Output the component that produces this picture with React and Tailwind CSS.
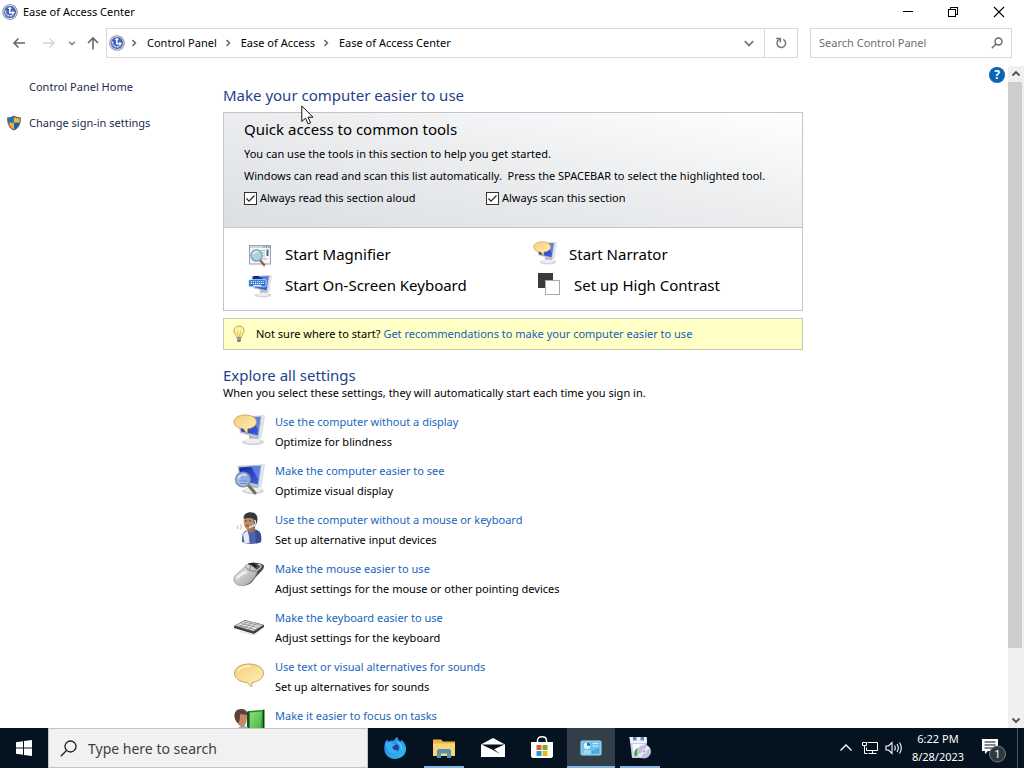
import React from "react";

const crumbs = ["Control Panel", "Ease of Access", "Ease of Access Center"];

function AccessIcon({ className }) {
  return (
    <svg viewBox="0 0 16 16" className={className} aria-hidden="true">
      <circle cx="8" cy="8" r="7.8" fill="#7f8ca3" />
      <circle cx="8" cy="8" r="6.9" fill="#cfd8e8" />
      <circle cx="8" cy="8" r="6" fill="#4560b5" />
      <path d="M7.800 4.500v4.200h3" fill="none" stroke="#fff" strokeWidth="1.500" />
      <path d="M5.800 5 7.800 2.600l2 2.400zM10.400 6.600l2.500 2.100-2.500 2z" fill="#fff" />
      <path d="M3.500 6.500c0 3.400 1.800 5.300 4.500 5.300 1.500 0 2.500-.5 3.300-1.300" fill="none" stroke="#dfe8ff" strokeWidth="1.500" strokeDasharray="1.800 .7" />
    </svg>
  );
}

function Shield() {
  return (
    <svg viewBox="0 0 16 16" className="h-4 w-4 shrink-0" aria-hidden="true">
      <path d="M8 .6C6 1.900 3.600 2.400 1.100 2.400c-.2 6.300 1.900 10.800 6.900 13.200 5-2.400 7.100-6.900 6.900-13.200C12.400 2.400 10 1.900 8 .6z" fill="#5a6470" />
      <path d="M8 1.900C6.300 2.900 4.200 3.400 2.200 3.400c0 1.500.1 3 .5 4.300H8z" fill="#2173b8" />
      <path d="M8 1.900c1.700 1 3.800 1.500 5.800 1.500 0 1.500-.1 3-.5 4.300H8z" fill="#f3b544" />
      <path d="M2.700 7.700C3.500 10.800 5.200 13 8 14.500V7.700z" fill="#f0ac3c" />
      <path d="M13.300 7.700C12.500 10.800 10.800 13 8 14.500V7.700z" fill="#1c62a5" />
    </svg>
  );
}

function MonitorShape() {
  return (
    <>
      <ellipse cx="20" cy="28" rx="11" ry="3.200" fill="#d3d5da" />
      <path d="M16 20l9 2 1 6-10-1z" fill="#b2b6bf" />
      <ellipse cx="19.500" cy="27" rx="8.500" ry="2.400" fill="#edeef1" />
      <path d="M4.500 3L29 1.500 26 24 7 19z" fill="#bcc3d0" />
      <path d="M28.500 1.500l3 .4-3.500 22-2.500.1z" fill="#e6e8ed" stroke="#b6bbc5" strokeWidth=".4" />
      <path d="M6 4.500L27.500 3l-2.700 18.500L8.200 17.500z" fill="url(#screen)" />
      <path d="M18 3.700L27.500 3l-2 13.500z" fill="#7d9cf0" opacity=".65" />
    </>
  );
}

function Bubble() {
  return (
    <path d="M12 1C5.500 1 1 4 1 8s4 6.500 9.500 6.800L14 20l.8-5.300C20 14.200 23.500 11.500 23.500 8 23.500 4 19 1 12 1z" fill="url(#bubble)" stroke="#c49a45" strokeWidth=".8" />
  );
}

function NarratorIcon({ className }) {
  return (
    <svg viewBox="0 0 32 32" className={className} aria-hidden="true">
      <MonitorShape />
      <Bubble />
    </svg>
  );
}

function SeeIcon({ className }) {
  return (
    <svg viewBox="0 0 32 32" className={className} aria-hidden="true">
      <MonitorShape />
      <path d="M15 22l7 8" stroke="#77705f" strokeWidth="3" strokeLinecap="round" />
      <circle cx="10" cy="16.500" r="7.300" fill="#9ebbe8" fillOpacity=".88" stroke="#8390a6" strokeWidth="1.600" />
      <path d="M5.500 15c1.500-3 5-4.500 8-2.500" stroke="#e3eeff" strokeWidth="1.500" fill="none" />
      <path d="M5.500 18h9M6.500 20.500h7" stroke="#6f8dd0" strokeWidth="1" />
    </svg>
  );
}

function ScreenKeyboardIcon({ className }) {
  return (
    <svg viewBox="0 0 32 32" className={className} aria-hidden="true">
      <MonitorShape />
      <path d="M8 8V3.500h7" stroke="#0f2370" strokeWidth="2" fill="none" />
      <rect x="1" y="7.500" width="23" height="9.500" rx="1" fill="#2377c9" stroke="#e6f1fb" />
      <path d="M3.500 10.300h18M3.500 12.700h18" stroke="#fff" strokeWidth="1.400" strokeDasharray="1.800 1" />
      <path d="M7 15.200h11" stroke="#fff" strokeWidth="1.300" />
    </svg>
  );
}

function MagnifierIcon({ className }) {
  return (
    <svg viewBox="0 0 24 24" className={className} aria-hidden="true">
      <rect x="1.500" y="2.500" width="21" height="18.500" fill="#f5f7f9" stroke="#9aa0a7" />
      <path d="M2 4h20" stroke="#cfd5db" strokeWidth="2" />
      <path d="M15.500 4h1M18 4h1M20.500 4h1" stroke="#3d444c" strokeWidth="1.200" />
      <path d="M13 7.500h4M14 10h3M14 13h3M14 16h5" stroke="#a6b6bf" />
      <path d="M18.500 6.500h2v6.500h-2z" fill="#406e8b" />
      <path d="M12 17l4 5" stroke="#a15b52" strokeWidth="2.400" strokeLinecap="round" />
      <circle cx="8.500" cy="12.500" r="5.600" fill="#a6d7e0" stroke="#849aa8" strokeWidth="1.300" />
      <path d="M5 11c1-2 3-3 5-2" fill="none" stroke="#e4f7fa" strokeWidth="1.300" />
    </svg>
  );
}

function ContrastIcon({ className }) {
  return (
    <svg viewBox="0 0 24 24" className={className} aria-hidden="true">
      <rect x="1" y="1" width="15" height="15" fill="#3b3b3b" />
      <rect x="8.500" y="8.500" width="14" height="14" fill="#fff" stroke="#a9a9a9" />
    </svg>
  );
}

function PersonIcon({ className }) {
  return (
    <svg viewBox="0 0 32 32" className={className} aria-hidden="true">
      <path d="M9 30c-.5-7 1-11 6-12l7-.5c5 1.500 7 4 6 12.500-5 2.500-14 2.500-19 0z" fill="#5262ae" />
      <path d="M14.500 18.500l1.500 6 .5 6.500h-5l-1.500-9z" fill="#e6eaf6" />
      <path d="M22 17.500c5 1.500 7 4 6 12.500l-5 1.500z" fill="#3c4b96" />
      <path d="M14 15l8-1v4.500L17 21l-2.500-2.500z" fill="#9d7152" />
      <path d="M11 6c-.5 3-.5 9 2.500 11 3 .8 7-.5 8.500-5l1-6z" fill="#bd8f6d" />
      <path d="M10.500 6.500C10.500 2.500 13.500.3 17.500.3c4.500 0 7 2.700 7 6.700 0 3-1 5-2.500 7-1-1.500-1-5-2-7.500-3-1-6-.5-9.500 0z" fill="#34373b" />
      <path d="M12 8.800h2M16 8.800h2M13 13.800h3" stroke="#5f3f30" />
      <path d="M21.500 8c1.500 1.500 1.500 4-.5 5.500l-5 2" fill="none" stroke="#eef1f5" strokeWidth="1.200" />
      <path d="M7.500 12.500q2 2.500 0 5M5 13.500q-2 2 0 3.500" fill="none" stroke="#d8b27c" />
    </svg>
  );
}

function MouseIcon({ className }) {
  return (
    <svg viewBox="0 0 32 32" className={className} aria-hidden="true">
      <path d="M14 4C17 1 28 1 31 4.500c1 4-6 8.500-10 14-3 5-8 7-13 5z" fill="#4c4d50" />
      <path d="M15 2.500l6-1 3 4-5 4z" fill="#222" />
      <path d="M.8 18C1 13 9 10 13 4c3-2 9 2 11 6 0 5-6 12-11 14C8 26 .5 24 .8 18z" fill="url(#silver)" stroke="#85878a" strokeWidth=".6" />
      <path d="M12.500 5.500c2 3.500 6 5 11 4.500M18 4.500l-1.500 4" stroke="#7b7d81" fill="none" />
      <path d="M4 17c4-4 7-5.500 10-6" stroke="#fff" strokeWidth="2.500" fill="none" opacity=".7" />
      <path d="M25 3.500c3 0 4 1.500 2 3.500l-4 3" stroke="#c4c6c9" strokeWidth="1.300" fill="none" />
    </svg>
  );
}

function KeyboardIcon({ className }) {
  return (
    <svg viewBox="0 0 32 32" className={className} aria-hidden="true">
      <path d="M1 16l11-6 19 5v2l-10 7L1 18z" fill="#3e3f42" />
      <path d="M2 15.500l10.500-5L30 15l-9.500 6z" fill="#e8e9eb" stroke="#8a8c90" strokeWidth=".6" />
      <path d="M5 15l17 4.500M8 13.500l17 4M11 12l16 3.500M7 17l7-5M11 18l8-5M16 19l7-5" stroke="#85878c" strokeWidth=".8" />
      <path d="M7 21.500l14 3.500 8-6" stroke="#dcdcdc" strokeWidth="1" fill="none" />
    </svg>
  );
}

function SoundBubbleIcon({ className }) {
  return (
    <svg viewBox="0 0 32 32" className={className} aria-hidden="true">
      <path d="M16 5C7.500 5 1.500 9 1.500 14.200S7 23 14 23.500L18.500 28l.7-4.600C26 22.600 30.500 19 30.500 14.200 30.500 9 24.500 5 16 5z" fill="url(#bubble)" stroke="#c7a563" />
      <path d="M5 12c2-3.500 7-5 12-5" stroke="#fff7dd" strokeWidth="1.500" fill="none" opacity=".8" />
    </svg>
  );
}

function FocusIcon({ className }) {
  return (
    <svg viewBox="0 0 32 32" className={className} aria-hidden="true">
      <path d="M15 3l15-1v27l-15-2z" fill="#1f8f2b" />
      <path d="M17 4.500l12-1-1 22-11-1z" fill="url(#green)" />
      <path d="M30 1.500h1.500V30H30z" fill="#173c1a" />
      <path d="M14 3.500h2V29h-2z" fill="#1c4b24" />
      <path d="M2 32c0-10 3-14 8-14s9 3 9 14z" fill="#8fb3cd" />
      <path d="M3 6c0 7 1.500 12 6.500 13 4-1.500 4.500-7 4.500-13z" fill="#c08a67" />
      <path d="M1.500 9C1 4 3.500 1 8 1s6.500 2 6 6c-3 0-5-1-7-.5 0 4-.5 7-1.500 9-2-1-3.300-3-4-6.500z" fill="#5d4336" />
    </svg>
  );
}

const settings = [
  [NarratorIcon, "Use the computer without a display", "Optimize for blindness"],
  [SeeIcon, "Make the computer easier to see", "Optimize visual display"],
  [PersonIcon, "Use the computer without a mouse or keyboard", "Set up alternative input devices"],
  [MouseIcon, "Make the mouse easier to use", "Adjust settings for the mouse or other pointing devices"],
  [KeyboardIcon, "Make the keyboard easier to use", "Adjust settings for the keyboard"],
  [SoundBubbleIcon, "Use text or visual alternatives for sounds", "Set up alternatives for sounds"],
  [FocusIcon, "Make it easier to focus on tasks", null],
];

function Chevron({ className, d = "M1.500 3.500 5 7l3.500-3.500", width = 1.5 }) {
  return (
    <svg viewBox="0 0 10 10" className={className} fill="none" stroke="currentColor" strokeWidth={width} aria-hidden="true">
      <path d={d} />
    </svg>
  );
}

function TitleBar() {
  return (
    <header className="flex h-6 shrink-0 items-center pl-0.5 pr-0.5">
      <AccessIcon className="h-4 w-4" />
      <h1 className="ml-[5px] flex-1 text-[11px]">Ease of Access Center</h1>
      <button aria-label="Minimize" className="flex h-6 w-[45px] items-center justify-center">
        <svg viewBox="0 0 12 12" className="h-3 w-3" stroke="#000" shapeRendering="crispEdges"><path d="M1 5.500h10" /></svg>
      </button>
      <button aria-label="Restore" className="flex h-6 w-[45px] items-center justify-center">
        <svg viewBox="0 0 12 12" className="h-3 w-3" fill="none" stroke="#000" shapeRendering="crispEdges"><path d="M1.500 3.500h7v7h-7zM3.500 3.500v-2h7v7h-2" /></svg>
      </button>
      <button aria-label="Close" className="flex h-6 w-[47px] items-center justify-center">
        <svg viewBox="0 0 12 12" className="h-3 w-3" stroke="#000" strokeWidth="1.100"><path d="M1 1l10 10M11 1 1 11" /></svg>
      </button>
    </header>
  );
}

function NavBar() {
  return (
    <nav className="mt-1 flex h-[30px] shrink-0 items-center pr-3">
      <div className="flex w-[106px] items-center pl-3 text-[#666]">
        <button aria-label="Back">
          <svg viewBox="0 0 14 14" className="h-3.5 w-3.5" fill="none" stroke="currentColor" strokeWidth="1.500"><path d="M13 7H2M6.500 2.500 2 7l4.500 4.500" /></svg>
        </button>
        <button aria-label="Forward" className="ml-4 text-[#d4d4d4]">
          <svg viewBox="0 0 14 14" className="h-3.5 w-3.5" fill="none" stroke="currentColor" strokeWidth="1.300"><path d="M1 7h11M7.500 2.500 12 7l-4.500 4.500" /></svg>
        </button>
        <button aria-label="Recent locations" className="ml-3"><Chevron className="h-2 w-2" /></button>
        <button aria-label="Up" className="ml-2.5">
          <svg viewBox="0 0 14 14" className="h-3.5 w-3.5" fill="none" stroke="currentColor" strokeWidth="1.600"><path d="M7 13.500V2M2 7l5-5 5 5" /></svg>
        </button>
      </div>
      <div className="flex h-full flex-1 items-center border border-[#d9d9d9] pl-0.5">
        <AccessIcon className="h-4 w-4" />
        {crumbs.map((c) => (
          <React.Fragment key={c}>
            <Chevron className="ml-1 mr-1.5 h-2.5 w-2.5 text-[#666]" d="M3.500 2 6.500 5l-3 3" />
            <a href="#" className="px-0.5 text-[11px]">{c}</a>
          </React.Fragment>
        ))}
        <button aria-label="Previous locations" className="ml-auto flex h-full w-[31px] items-center justify-center text-[#777]">
          <Chevron className="h-3 w-3" />
        </button>
        <button aria-label="Refresh" className="flex h-full w-[33px] items-center justify-center border-l border-[#d9d9d9]">
          <svg viewBox="0 0 12 12" className="h-3 w-3" fill="none" stroke="#777" strokeWidth="1.500"><path d="M8.200 2.300A4.300 4.300 0 1 1 3.200 3.200L4.800 2" /><path d="M1.200 1.500h4.200v4" /></svg>
        </button>
      </div>
      <label className="ml-3 flex h-full w-[202px] items-center border border-[#d9d9d9] pl-2 pr-2">
        <input aria-label="Search Control Panel" placeholder="Search Control Panel" className="min-w-0 flex-1 text-[11px] outline-none placeholder:text-[#6d6d6d]" />
        <svg viewBox="0 0 12 12" className="h-3 w-3" fill="none" stroke="#666" strokeWidth="1.400"><circle cx="7.500" cy="4.500" r="3.500" /><path d="M5 7 .8 11.200" /></svg>
      </label>
    </nav>
  );
}

function Check({ children }) {
  return (
    <label className="flex flex-1 items-center gap-[3px]">
      <span className="relative flex h-[13px] w-[13px]">
        <input type="checkbox" defaultChecked className="peer h-[13px] w-[13px] appearance-none border border-[#333] bg-white" />
        <svg viewBox="0 0 13 13" className="pointer-events-none absolute inset-0 hidden peer-checked:block" fill="none" stroke="#222" strokeWidth="1.200" aria-hidden="true"><path d="M2.500 6.500 5 9.200l5.500-5.700" /></svg>
      </span>
      {children}
    </label>
  );
}

function QuickAccess() {
  return (
    <section className="mt-1.5 border border-[#c4c4c8]">
      <div className="flex h-[115px] flex-col border-b border-[#c4c4c8] bg-linear-to-tr from-[#dcdfe2] via-[#eceef0] via-55% to-white pl-5 pt-[5px]">
        <h3 className="text-[15px] leading-[22px]">Quick access to common tools</h3>
        <p className="mt-[3px] leading-[22px]">You can use the tools in this section to help you get started.</p>
        <p className="whitespace-pre leading-[22px]">Windows can read and scan this list automatically.  Press the SPACEBAR to select the highlighted tool.</p>
        <div className="flex h-[22px] w-[484px] items-center">
          <Check>Always read this section aloud</Check>
          <Check>Always scan this section</Check>
        </div>
      </div>
      <div className="grid h-[82px] grid-cols-2 content-center pl-6 pt-0.5 text-[15px]">
        <button className="flex h-[31px] items-center gap-[13px] text-left"><MagnifierIcon className="h-6 w-6" />Start Magnifier</button>
        <button className="flex h-[31px] items-center gap-3 pl-2 text-left"><NarratorIcon className="mb-1 h-6 w-6" />Start Narrator</button>
        <button className="flex h-[31px] items-center gap-[13px] text-left"><ScreenKeyboardIcon className="h-6 w-6" />Start On-Screen Keyboard</button>
        <button className="flex h-[31px] items-center gap-[13px] pl-3 text-left"><ContrastIcon className="mb-1 h-6 w-6" />Set up High Contrast</button>
      </div>
    </section>
  );
}

function Content() {
  return (
    <div className="mt-2 flex min-h-0 flex-1 overflow-hidden text-[11px]">
      <aside className="w-[223px] shrink-0 pl-1.5 text-[#1d2a4d]">
        <a href="#" className="mt-3 block pl-[23px] leading-[18px]">Control Panel Home</a>
        <a href="#" className="mt-[18px] flex items-center gap-[7px] leading-[18px]"><Shield />Change sign-in settings</a>
      </aside>
      <main className="min-w-0 flex-1">
        <div className="max-w-[580px] pt-[18px]">
          <h2 className="text-[15px] leading-[22px] text-[#1f3f8c]">Make your computer easier to use</h2>
          <QuickAccess />
          <p className="mt-[7px] flex h-8 items-center border border-[#c8c8b0] bg-[#ffffc6] pl-[9px]">
            <svg viewBox="0 0 12 18" className="mr-[11px] h-[18px] w-3" aria-hidden="true">
              <path d="M6 1a4.800 4.800 0 0 0-5 4.900C1 8.500 3.300 9.500 3.700 12.500h4.600C8.700 9.500 11 8.500 11 5.900A4.800 4.800 0 0 0 6 1z" fill="#fdf3a3" stroke="#c4a653" />
              <path d="M4.300 6l1.200 6M7.700 6l-1.200 6" stroke="#d9b354" strokeWidth=".8" />
              <path d="M4 12.500h4v3.200L7 17H5l-1-1.300z" fill="#757b83" />
              <path d="M4 14h4" stroke="#c6cbd0" strokeWidth=".8" />
            </svg>
            <span>Not sure where to start? <a href="#" className="text-[#0f63b8]">Get recommendations to make your computer easier to use</a></span>
          </p>
          <h2 className="mt-3.5 text-[15px] leading-[22px] text-[#1f3f8c]">Explore all settings</h2>
          <p className="leading-[14px]">When you select these settings, they will automatically start each time you sign in.</p>
          <ul className="mt-3">
            {settings.map(([Icon, title, text]) => (
              <li key={title} className="flex h-[49px] pl-2.5">
                <Icon className="mt-0.5 h-8 w-8 shrink-0" />
                <div className="ml-2.5 leading-5">
                  <a href="#" className="block text-[#1866bd]">{title}</a>
                  {text && <p>{text}</p>}
                </div>
              </li>
            ))}
          </ul>
        </div>
      </main>
      <button aria-label="Help" className="mr-[3px] mt-[1px] flex h-4 w-4 shrink-0 items-center justify-center rounded-full bg-[#0b64b5] text-[12px] leading-4 font-bold text-white">?</button>
      <div className="flex w-4 shrink-0 flex-col bg-[#f0f0f0] text-[#505050]" aria-hidden="true">
        <span className="flex h-4 items-center justify-center"><Chevron className="h-2.5 w-2.5" d="M1.500 6.500 5 3l3.500 3.500" width={1.8} /></span>
        <span className="mr-0.5 h-[85.5%] bg-[#cdcdcd]" />
        <span className="mt-auto flex h-4 items-center justify-center"><Chevron className="h-2.5 w-2.5" width={1.8} /></span>
      </div>
    </div>
  );
}

function FirefoxIcon() {
  return (
    <svg viewBox="0 0 24 24" className="h-6 w-6" aria-hidden="true">
      <path d="M2.500 5.500C3 4.500 3.500 4 4.500 3.500c0 1 .3 1.500 1 2C7 4.500 9 4.200 11 4.500 11.500 3 13 1.500 14.500 1c.3 2 1.500 3.500 3 4.500L18.500 4c3 2.500 5 6 4.500 10-.7 5.500-5.500 9-11 9C6 23 1.300 18.500 1.300 12.500c0-2.500.3-4.500 1.200-7z" fill="url(#fox)" />
      <circle cx="11.800" cy="12" r="4.300" fill="#2a3f9f" />
      <path d="M2.500 7c2-1 5-1 7 .5l3.500.6c-1 2-3.200 1.500-3.700 3 .2 2.700 3.200 4.200 5.700 2.300-.8 4.500-7.300 5.100-9.700.9C3.500 12.500 2.500 10 2.500 7z" fill="#38b2f2" />
      <path d="M14 6c3 1 5 4 4.500 8" stroke="#5ccdf5" strokeWidth="1.200" fill="none" />
    </svg>
  );
}

function FolderIcon() {
  return (
    <svg viewBox="0 0 24 24" className="h-6 w-6" aria-hidden="true">
      <path d="M1 3.500h8l2 2h12V20H1z" fill="#e9b548" />
      <path d="M1 7.500h22V20H1z" fill="#f9d672" />
      <path d="M5 22v-7.500L6.500 13h11l1.500 1.500V22h-4v-4.500H9V22z" fill="#5590b5" />
    </svg>
  );
}

function MailIcon() {
  return (
    <svg viewBox="0 0 26 24" className="h-6 w-[26px]" aria-hidden="true">
      <path d="M1 8.500 13 2l12 6.500V21H1z" fill="#fff" />
      <path d="M1.500 8.500h23l-10.500 4.700 6 4.800L12 13.500z" fill="#04131c" />
    </svg>
  );
}

function StoreIcon() {
  return (
    <svg viewBox="0 0 24 24" className="h-6 w-6" aria-hidden="true">
      <path d="M7.500 7V4.500C7.500 2 9 .8 12 .8s4.500 1.200 4.500 3.700V7" fill="none" stroke="#fff" strokeWidth="1.400" />
      <path d="M1 6h22v14.500L21.500 22h-19L1 20.500z" fill="#fff" />
      <path d="M6.500 9h5v5h-5z" fill="#df5a38" />
      <path d="M12.500 9h5v5h-5z" fill="#78ad28" />
      <path d="M6.500 15h5v5h-5z" fill="#1e98d8" />
      <path d="M12.500 15h5v5h-5z" fill="#f5b518" />
    </svg>
  );
}

function ControlPanelIcon() {
  return (
    <svg viewBox="0 0 24 24" className="h-6 w-6" aria-hidden="true">
      <rect x="2" y="5" width="20" height="14" rx="1" fill="#6cc0ee" stroke="#a5dcf8" />
      <circle cx="8" cy="9.800" r="3.200" fill="#e6f5fd" />
      <path d="M8 9.800V6.600a3.200 3.200 0 0 1 3.200 3.200z" fill="#1673ba" />
      <path d="M13.500 7.500h6M13.500 10h6M4.500 15h7M4.500 17h7" stroke="#d4effd" strokeWidth="1.200" />
      <path d="M14 17.500v-3M16.500 17.500v-4M19 17.500v-5" stroke="#3b93cc" strokeWidth="1.400" />
    </svg>
  );
}

function ProgramsIcon() {
  return (
    <svg viewBox="0 0 24 24" className="h-6 w-6" aria-hidden="true">
      <path d="M1.500 1h17l.5 5-2 16H4z" fill="#c9cfe2" />
      <path d="M1.500 1h17l.5 6H2.500z" fill="#eef2fa" />
      <path d="M5 1h3.500v3.500H5zM12.500 1H16v3.500h-3.500z" fill="#6f83b5" />
      <path d="M4.500 8H16v12H5.500z" fill="#f4fbff" />
      <path d="M6.500 20c-1-4 0-7 4-8 0 4 0 7-2 8z" fill="#3fa845" />
      <circle cx="16" cy="15.500" r="6.600" fill="#c2bee3" stroke="#e2dff5" strokeWidth=".6" />
      <path d="M16 15.500l3-6 3 3zM16 15.500l-3 6-3-3z" fill="#eeeafd" />
      <circle cx="16" cy="15.500" r="1.800" fill="#9c98cc" stroke="#fff" />
    </svg>
  );
}

const apps = [
  ["Firefox", FirefoxIcon, ""],
  ["File Explorer", FolderIcon, "open"],
  ["Mail", MailIcon, ""],
  ["Microsoft Store", StoreIcon, ""],
  ["Control Panel", ControlPanelIcon, "active"],
  ["Programs", ProgramsIcon, "open"],
];

function Taskbar() {
  return (
    <footer className="flex h-10 shrink-0 items-center bg-[#04131f] text-white">
      <button aria-label="Start" className="flex h-full w-12 items-center justify-center">
        <svg viewBox="0 0 16 16" className="h-4 w-4" fill="#fff"><path d="M0 2.200 7 1.200v6.300H0zM8 1.100 16 0v7.500H8zM0 8.500h7v6.300l-7-1zM8 8.500h8V16l-8-1.100z" /></svg>
      </button>
      <label className="flex h-full w-80 items-center border border-[#c4c4c4] bg-[#f1f1f1] pl-[11px]">
        <svg viewBox="0 0 17 17" className="h-[17px] w-[17px]" fill="none" stroke="#1b1b1b" strokeWidth="1.300"><circle cx="10.500" cy="6.500" r="5.500" /><path d="M6.500 10.500.8 16.200" /></svg>
        <input aria-label="Type here to search" placeholder="Type here to search" className="ml-[11px] min-w-0 flex-1 text-[14px] outline-none placeholder:text-[#3f3f3f]" />
      </label>
      <div className="ml-[3px] flex h-full gap-px">
        {apps.map(([name, Icon, state]) => (
          <button key={name} aria-label={name} className={state === "active" ? "flex h-full w-12 flex-col items-center bg-[#323f49]" : "flex h-full w-12 flex-col items-center"}>
            <span className="flex flex-1 items-center pt-0.5"><Icon /></span>
            <span className={state === "active" ? "h-0.5 w-full bg-[#84b5e6]" : state === "open" ? "h-0.5 w-10 bg-[#84b5e6]" : "h-0.5"} />
          </button>
        ))}
      </div>
      <div className="ml-auto flex h-full items-center">
        <button aria-label="Show hidden icons">
          <svg viewBox="0 0 14 14" className="h-3.5 w-3.5" fill="none" stroke="#fff" strokeWidth="1.300"><path d="M1.500 9.500 7 4l5.500 5.500" /></svg>
        </button>
        <button aria-label="Network" className="ml-2">
          <svg viewBox="0 0 18 16" className="h-4 w-[18px]" fill="none" stroke="#fff"><path d="M6.500 2.500h10v8h-11v-3M11.500 10.500v3M7.500 13.500h8" /><path d="M1.500 2.500h4v3h-4zM3.500 5.500v8h3" /></svg>
        </button>
        <button aria-label="Volume" className="ml-1.5">
          <svg viewBox="0 0 18 16" className="h-4 w-[18px]" fill="none" stroke="#fff" strokeWidth="1.100"><path d="M1 6h2.500L7 2.500v11L3.500 10H1z" /><path d="M9.500 5.500q1.600 2.500 0 5M12 4q2.600 4 0 8M14.500 2.500q3.600 5.500 0 11" /></svg>
        </button>
        <time className="ml-1.5 w-[58px] text-center text-[11px] leading-[18px]">6:22 PM<br />8/28/2023</time>
        <button aria-label="Notifications" className="ml-3.5">
          <svg viewBox="0 0 26 26" className="mt-1 h-[26px] w-[26px]"><path d="M1 2h16v12H7l-3 3v-3H1z" fill="#fff" /><path d="M3.500 5h11M3.500 8h11M3.500 11h8" stroke="#04131f" strokeWidth="1.200" /><circle cx="16.500" cy="17" r="8" fill="#2e3940" stroke="#737b81" /><text x="16.500" y="21" textAnchor="middle" fontSize="11" fill="#fff">1</text></svg>
        </button>
        <span className="ml-2.5 mr-1.5 h-full w-px bg-[#4a5861]" />
      </div>
    </footer>
  );
}

export default function App() {
  return (
    <div className="relative flex h-screen flex-col overflow-hidden bg-white font-['Noto_Sans','Open_Sans',sans-serif] text-black">
      <svg className="absolute h-0 w-0" aria-hidden="true">
        <defs>
          <linearGradient id="bubble" x1="0" y1="0" x2="1" y2="1"><stop offset="0" stopColor="#f5cf78" /><stop offset="1" stopColor="#fdf0c0" /></linearGradient>
          <linearGradient id="silver" x1="0" y1="0" x2="1" y2="1"><stop offset="0" stopColor="#f0f0f1" /><stop offset="1" stopColor="#9a9ca0" /></linearGradient>
          <linearGradient id="screen" x1="0" y1="0" x2="1" y2="1"><stop offset="0" stopColor="#0f25a0" /><stop offset="1" stopColor="#3f68e6" /></linearGradient>
          <linearGradient id="green" x1="0" y1="0" x2="1" y2="1"><stop offset="0" stopColor="#8fe07c" /><stop offset="1" stopColor="#3cae3c" /></linearGradient>
          <linearGradient id="fox" x1="0" y1="0" x2="1" y2="1"><stop offset="0" stopColor="#1c8df0" /><stop offset=".5" stopColor="#2f9cf3" /><stop offset="1" stopColor="#35c3dd" /></linearGradient>
        </defs>
      </svg>
      <TitleBar />
      <NavBar />
      <Content />
      <Taskbar />
      <svg viewBox="0 0 13 20" className="pointer-events-none absolute left-[301px] top-[105px] h-5 w-[13px]" aria-hidden="true">
        <path d="M.8 1v15.500l3.700-3.400 2.600 5.800 2.500-1.100L7 12.200h5z" fill="#fff" stroke="#111" />
      </svg>
    </div>
  );
}
